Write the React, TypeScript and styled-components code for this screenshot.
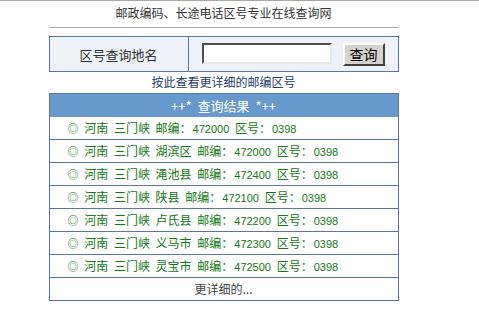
import styled, { createGlobalStyle } from 'styled-components';

const GlobalStyle = createGlobalStyle`
    body {
        margin: 0;
        border-top: 1px solid #a8a8a8;
        background: #ffffff;
        font-family: 'Noto Sans CJK SC', 'Liberation Sans', sans-serif;
        font-size: 12px;
        color: #333333;
    }
`;

const Page = styled.div`
    width: 447px;
`;

const Title = styled.div`
    height: 26px;
    padding-top: 3px;
    box-sizing: border-box;
    line-height: 18px;
    text-align: center;
    color: #333333;
`;

const Rule = styled.hr`
    width: 350px;
    margin: 0 auto 8px;
    border: none;
    border-top: 1px solid #a4a8b0;
    height: 0;
`;

const SearchBox = styled.div`
    width: 350px;
    margin: 0 auto;
    box-sizing: border-box;
    height: 36px;
    display: grid;
    grid-template-columns: 139px 1fr;
    border: 1px solid #5777a8;
    background: #eef2f8;
`;

const Label = styled.div`
    display: flex;
    align-items: center;
    justify-content: center;
    border-right: 1px solid #5777a8;
    font-size: 13px;
    color: #333333;
`;

const Field = styled.div`
    display: flex;
    align-items: center;
    padding-left: 13px;
    gap: 11px;
`;

const Input = styled.input`
    width: 130px;
    height: 21px;
    box-sizing: border-box;
    background: #ffffff;
    border: 2px solid;
    border-color: #505050 #e8e8e8 #e8e8e8 #505050;
    padding: 0 3px;
    margin-top: -1px;
`;

const SearchButton = styled.button`
    width: 42px;
    height: 23px;
    box-sizing: border-box;
    background: #d6d3ce;
    border: 2px solid;
    border-color: #ffffff #404040 #404040 #ffffff;
    font-family: 'Noto Sans CJK SC', sans-serif;
    font-size: 14px;
    line-height: 17px;
    padding: 0;
    color: #000000;
`;

const MoreLink = styled.div`
    height: 21px;
    line-height: 20px;
    text-align: center;
    color: #1d3d6b;
`;

const Results = styled.div`
    width: 350px;
    margin: 0 auto;
    box-sizing: border-box;
    border: 1px solid #5777a8;
    background: #ffffff;
`;

const Header = styled.div`
    height: 23px;
    line-height: 23px;
    background: #6799cc;
    color: #ffffff;
    text-align: center;
    font-size: 13px;
    word-spacing: 3px;
`;

const Row = styled.div<{ $first?: boolean; $center?: boolean }>`
    height: 22px;
    line-height: 22px;
    border-top: ${(p) => (p.$first ? 'none' : '1px solid #5777a8')};
    padding-left: ${(p) => (p.$center ? '0' : '18px')};
    text-align: ${(p) => (p.$center ? 'center' : 'left')};
    color: ${(p) => (p.$center ? '#444444' : '#117a11')};
    white-space: pre;
    word-spacing: 3px;
`;

const Mark = styled.span`
    font-size: 11px;
`;

const Num = styled.span`
    font-family: 'Liberation Sans', Arial, sans-serif;
    font-size: 11px;
    margin-left: 1px;
`;

const rows = [
    { place: '', zip: '472000' },
    { place: '湖滨区 ', zip: '472000' },
    { place: '渑池县 ', zip: '472400' },
    { place: '陕县 ', zip: '472100' },
    { place: '卢氏县 ', zip: '472200' },
    { place: '义马市 ', zip: '472300' },
    { place: '灵宝市 ', zip: '472500' },
];

const App = () => {
    return (
        <Page>
            <GlobalStyle />
            <Title>邮政编码、长途电话区号专业在线查询网</Title>
            <Rule />
            <SearchBox>
                <Label>区号查询地名</Label>
                <Field>
                    <Input type="text" />
                    <SearchButton type="button">查询</SearchButton>
                </Field>
            </SearchBox>
            <MoreLink>按此查看更详细的邮编区号</MoreLink>
            <Results>
                <Header>++* 查询结果 *++</Header>
                {rows.map((r, i) => (
                    <Row key={i} $first={i === 0}>
                        <Mark>◎</Mark>
                        {' 河南 三门峡 ' + r.place + '邮编：'}
                        <Num>{r.zip}</Num>
                        {' 区号：'}
                        <Num>0398</Num>
                    </Row>
                ))}
                <Row $center>更详细的...</Row>
            </Results>
        </Page>
    );
};

export default App;
